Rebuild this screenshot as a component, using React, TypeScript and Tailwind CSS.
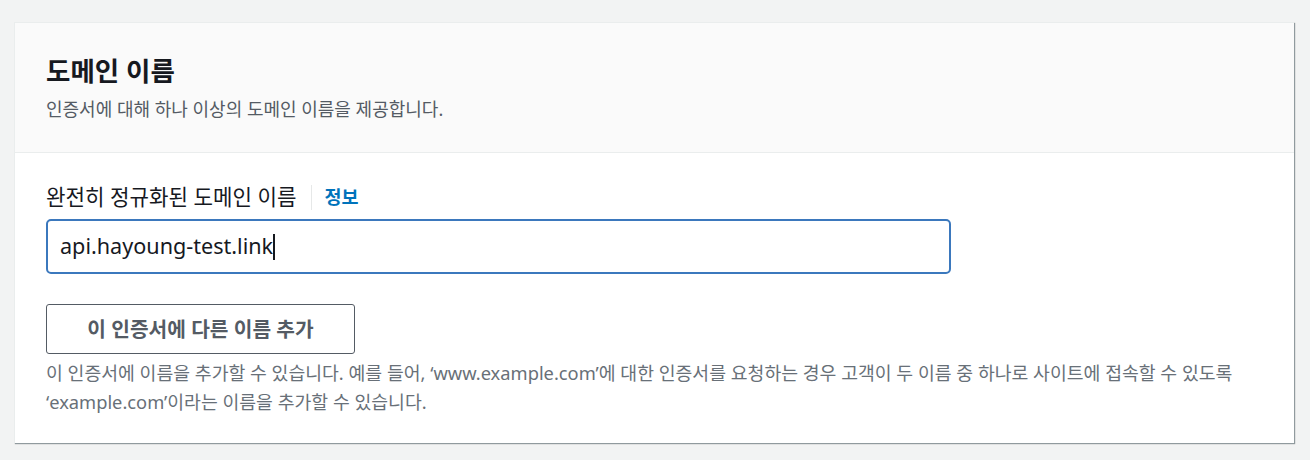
import React from "react";

export default function App() {
  return (
    <div
      className="w-[1310px] h-[460px] bg-[#f2f3f3] pt-[22px] pl-[14px]"
      style={{ fontFamily: '"Noto Sans", "Noto Sans CJK KR", sans-serif' }}
    >
      <div className="w-[1280px] h-[421px] bg-white border-t border-l border-[#eaeded] shadow-[1px_1px_1px_0_rgba(0,28,36,0.3),1px_1px_1px_0_rgba(0,28,36,0.15)] flex flex-col">
        <div className="h-[130px] bg-[#fafafa] border-b border-[#eaeded] pl-[31px] pt-[29px]">
          <h2 className="text-[26.5px] leading-[38px] font-bold text-[#16191f]">도메인 이름</h2>
          <p className="text-[18px] leading-[24px] text-[#545b64] mt-[7px]">
            인증서에 대해 하나 이상의 도메인 이름을 제공합니다.
          </p>
        </div>
        <div className="pl-[31px] pt-[30px]">
          <div className="flex items-center h-[28px]">
            <span className="text-[21.2px] text-[#16191f]">완전히 정규화된 도메인 이름</span>
            <span className="ml-[15px] mr-[12px] w-px h-[25px] bg-[#e6e8e8]" />
            <span className="text-[18.5px] font-bold text-[#0073bb]">정보</span>
          </div>
          <div className="mt-[8px] w-[905px] h-[55px] border-2 border-[#3b78bd] rounded-[5px] flex items-center pl-[12px]">
            <span className="text-[21.6px] text-[#16191f]">api.hayoung-test.link</span>
            <span className="w-[1.5px] h-[26px] bg-[#16191f]" />
          </div>
          <button className="mt-[30px] w-[309px] h-[50px] border border-[#545b64] rounded-[3px] text-[20.3px] font-bold text-[#545b64] bg-white">
            이 인증서에 다른 이름 추가
          </button>
          <p className="mt-[4px] text-[18.3px] leading-[29px] text-[#687078]">
            이 인증서에 이름을 추가할 수 있습니다. 예를 들어, ‘www.example.com’에 대한 인증서를 요청하는 경우 고객이 두 이름 중 하나로 사이트에 접속할 수 있도록
            <br />
            ‘example.com’이라는 이름을 추가할 수 있습니다.
          </p>
        </div>
      </div>
    </div>
  );
}
